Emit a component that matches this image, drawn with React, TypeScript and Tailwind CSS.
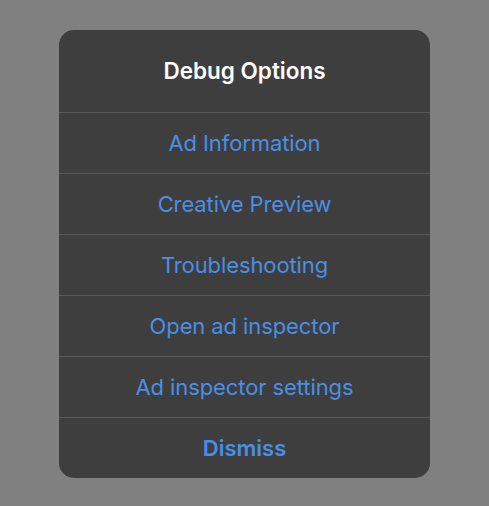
import React from "react";

const items = [
  "Ad Information",
  "Creative Preview",
  "Troubleshooting",
  "Open ad inspector",
  "Ad inspector settings",
];

export default function App() {
  return (
    <div
      className="w-[489px] h-[506px] bg-[#808080] flex justify-center pt-[30px]"
      style={{ fontFamily: "Inter, 'Noto Sans', sans-serif" }}
    >
      <div className="w-[371px] h-[448px] bg-[#3e3e3e] rounded-[15px] overflow-hidden flex flex-col">
        <div className="h-[82px] flex items-center justify-center text-white text-[22.5px] font-semibold">
          Debug Options
        </div>
        {items.map((t) => (
          <div
            key={t}
            className="h-[61px] border-t border-[#585858] flex items-center justify-center text-[#4a8fe6] text-[22px] tracking-[-0.1px]"
          >
            {t}
          </div>
        ))}
        <div className="flex-1 border-t border-[#585858] flex items-center justify-center text-[#4a8fe6] text-[22px] font-semibold">
          Dismiss
        </div>
      </div>
    </div>
  );
}
